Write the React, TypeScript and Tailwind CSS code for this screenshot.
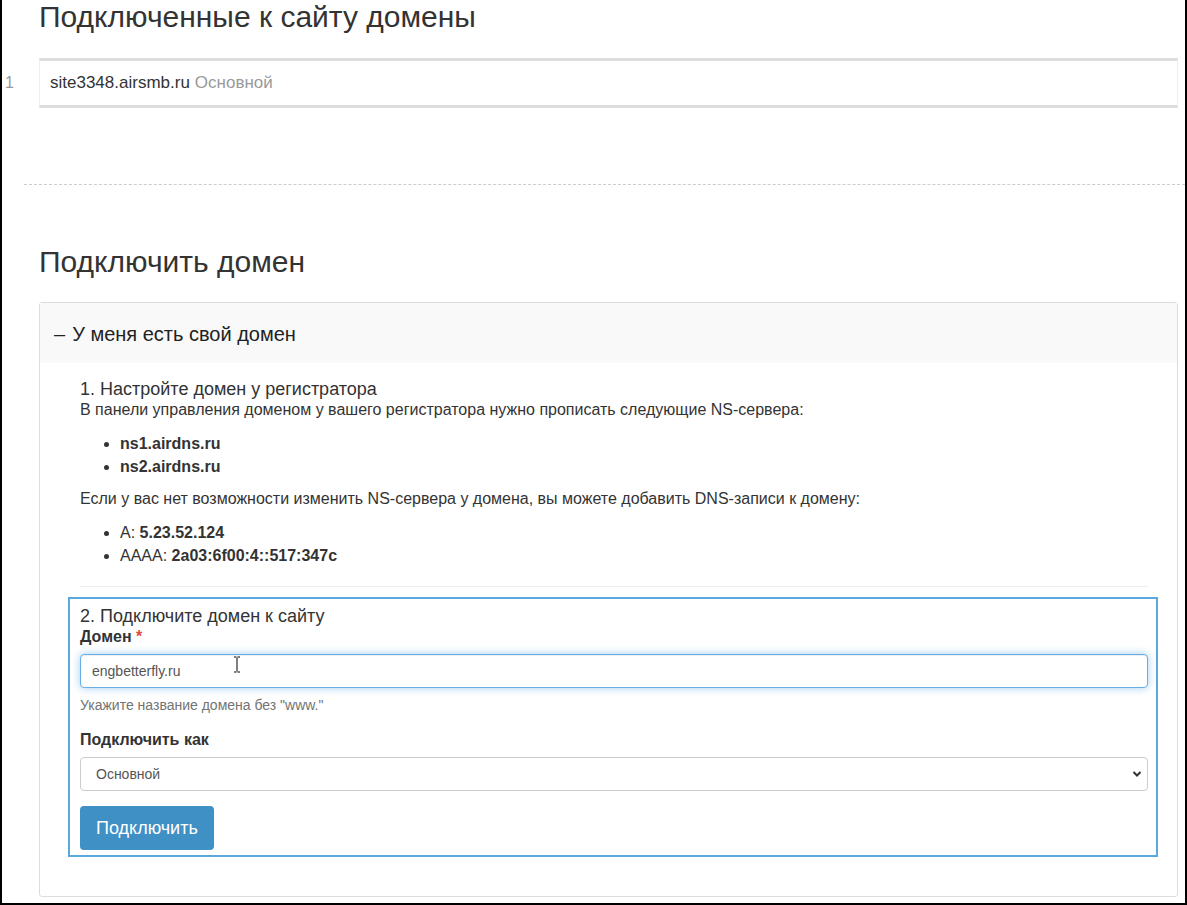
import React from 'react';

const App: React.FC = () => {
  return (
    <div className="relative w-[1187px] h-[905px] bg-white border-l-2 border-r-2 border-b-2 border-black overflow-hidden font-['Liberation_Sans',Arial,sans-serif] text-[#333]">
      {/* CONNECTED DOMAINS */}
      <div className="pl-[37px] pr-[7px]">
        <h2 className="text-[30px] leading-[33px] text-[#333]">Подключенные к сайту домены</h2>
        <div className="relative mt-[25px]">
          <span className="absolute left-[-34px] top-[13px] text-[16px] text-[#999]">1</span>
          <div className="h-[50px] flex items-center px-[10px] border-t-[3px] border-b-[3px] border-[#ddd] border-x border-x-[#eee] text-[17px]">
            <span className="text-[#333]">site3348.airsmb.ru</span>
            <span className="ml-[5px] text-[#999]">Основной</span>
          </div>
        </div>
      </div>

      <div className="ml-[22px] mt-[76px] border-t border-dashed border-[#ccc]" />

      {/* CONNECT DOMAIN */}
      <div className="pl-[37px] pr-[7px]">
        <h2 className="mt-[60px] text-[30px] leading-[33px] text-[#333]">Подключить домен</h2>

        <div className="mt-[24px] border border-[#ddd] rounded-[3px]">
          <div className="h-[60px] pt-[2px] bg-[#f9f9f9] flex items-center pl-[14px] text-[20px] text-[#222]">
            <span className="mr-[7px]">–</span>
            <span>У меня есть свой домен</span>
          </div>

          <div className="pl-[40px] pr-[29px] pt-[15px] pb-[39px] text-[16px]">
            <h4 className="text-[18px] leading-[22px]">1. Настройте домен у регистратора</h4>
            <p className="leading-[20px]">В панели управления доменом у вашего регистратора нужно прописать следующие NS-сервера:</p>
            <ul className="mt-[12px] pl-10 list-disc leading-[23px]">
              <li><b>ns1.airdns.ru</b></li>
              <li><b>ns2.airdns.ru</b></li>
            </ul>
            <p className="mt-[11px] leading-[20px]">Если у вас нет возможности изменить NS-сервера у домена, вы можете добавить DNS-записи к домену:</p>
            <ul className="mt-[12px] pl-10 list-disc leading-[23px]">
              <li>A: <b>5.23.52.124</b></li>
              <li>AAAA: <b>2a03:6f00:4::517:347c</b></li>
            </ul>
            <div className="mt-[19px] border-t border-[#eee]" />

            <div className="mt-[10px] ml-[-12px] mr-[-10px] border-2 border-[#5ba8dc] pl-[10px] pr-[8px] pt-[6px] pb-[5px]">
              <h4 className="text-[18px] leading-[22px]">2. Подключите домен к сайту</h4>
              <label className="block leading-[20px] font-bold">
                Домен <span className="text-[#dd4b39]">*</span>
              </label>
              <div className="relative mt-[7px]">
                <input
                  defaultValue="engbetterfly.ru"
                  className="w-full h-[34px] px-[11px] text-[14px] text-[#555] bg-white border border-[#66afe9] rounded-[4px] outline-none shadow-[inset_0_1px_1px_rgba(0,0,0,0.075),0_0_8px_rgba(102,175,233,0.6)]"
                />
                <svg className="absolute left-[153px] top-[2px]" width="8" height="17" viewBox="0 0 8 17">
                  <path d="M1 1h2.5M4.5 1H7M4 1.5v14M1 16h2.5M4.5 16H7" stroke="#000" strokeWidth="1" fill="none" />
                </svg>
              </div>
              <p className="mt-[8px] text-[14px] leading-[18px] text-[#737373]">Укажите название домена без "www."</p>
              <label className="block mt-[16px] leading-[20px] font-bold">Подключить как</label>
              <div className="relative mt-[7px]">
                <select className="w-full h-[34px] pl-[15px] pr-[30px] text-[14px] text-[#555] bg-white border border-[#ccc] rounded-[4px] appearance-none outline-none">
                  <option>Основной</option>
                  <option>Дополнительный</option>
                </select>
                <svg className="absolute right-[6px] top-[13px] pointer-events-none" width="10" height="8" viewBox="0 0 10 8">
                  <path d="M1.5 2l3.5 3.5L8.5 2" stroke="#333" strokeWidth="2" fill="none" />
                </svg>
              </div>
              <button className="mt-[15px] h-[44px] px-[16px] rounded-[4px] bg-[#3f91c5] text-white text-[18px]">Подключить</button>
            </div>
          </div>
        </div>
      </div>
    </div>
  );
};

export default App;
